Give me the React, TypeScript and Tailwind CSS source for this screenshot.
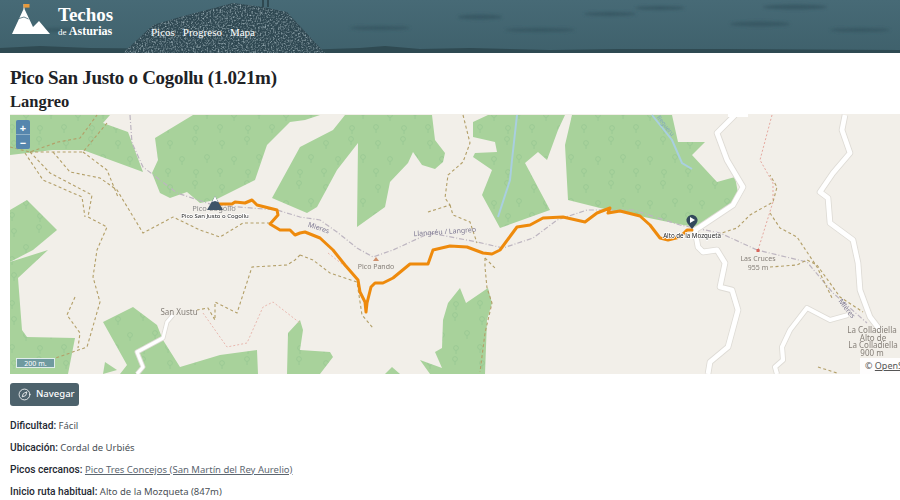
import { Compass } from 'lucide-react';

const FOREST = [
  '10,115 110,115 103,123 128,132 143,172 83,150 53,150 10,155',
  '155,138 193,115 320,115 305,120 290,122 267,145 255,180 215,200 200,203 187,192 170,198 160,193 152,173 158,160',
  '300,147 333,130 345,115 432,115 435,140 445,153 443,162 435,169 422,165 413,152 408,163 390,182 385,207 357,227 358,143 337,170 317,207 307,213 272,198',
  '473,122 488,115 565,115 558,130 547,160 538,152 525,163 550,210 500,228 482,195 492,170 473,157 475,153 497,152 495,142 473,137',
  '572,115 672,115 678,142 705,142 692,155 717,182 735,177 738,193 730,210 697,227 683,225 600,208 568,200 565,145',
  '10,210 27,200 57,230 33,250 10,262',
  '48,250 18,278 22,330 27,337 75,338 68,374 10,374 10,262',
  '103,322 133,307 157,325 163,340 180,367 220,355 257,350 258,374 120,374 127,365',
  '105,362 117,370 103,374',
  '300,320 303,330 300,350 330,352 333,357 320,374 287,374 288,333',
  '460,288 466,303 488,288 492,303 487,320 485,374 430,374 420,360 442,368 435,352 442,348 443,320 448,303',
  '392,367 400,374 385,374',
];

const ROADS = [
  { points: '735,115 717,133 727,160 743,187 733,205 700,227 695,230 698,247 703,252 717,250 725,263 720,287 732,290 738,310 728,347 710,362 708,374', width: 4.8 },
  { points: '845,115 842,130 850,153 833,173 820,192 828,198 830,223 853,240 858,263 860,290 870,317 880,330', width: 4.8 },
  { points: '777,374 775,367 783,360 782,347 790,330 807,308 830,320 848,315', width: 4.2 },
  { points: '137,374 143,367 137,352 163,338 167,322 173,315', width: 3.2 },
];

const TRACKS = [
  '10,147 30,152 58,142 80,138 97,115',
  '107,123 83,152 53,152 30,152',
  '53,152 70,172 100,178 117,190 143,233 173,217 200,230 220,237 243,223 270,223',
  '83,152 107,170 118,197',
  '30,152 50,173 92,195 88,217 107,227 97,250 93,277 100,302 87,347 50,360 40,368',
  '25,153 43,180 82,197 85,217',
  '75,297 67,315 80,333 78,348',
  '300,255 295,260 287,265 252,267 237,313 215,302 215,320 208,308 197,310',
  '300,255 313,260 330,273 357,282 362,315 373,328',
  '463,115 470,143 463,162 448,175 445,198 450,205 428,212',
  '450,205 453,215 470,222 477,243',
  '485,258 485,267 487,288 492,303 485,333 480,372',
  '485,258 495,268',
  '707,238 737,228 750,215 773,202 777,187 770,175',
  '770,213 780,228 797,237 817,267 833,300',
  '770,267 797,265 807,260 817,265 840,297 863,312',
  '818,367 837,373',
];

const ROUTE =
  '217,204 232,204 235,202 245,203 252,200 257,205 277,210 278,215 270,224 280,230 290,230 295,235 300,233 305,232 320,238 333,250 345,265 358,280 360,292 365,302 366,312 367,303 371,287 375,283 383,283 393,278 410,264 428,264 433,250 450,246 467,247 483,253 492,254 500,250 517,227 530,225 543,218 563,217 585,222 597,213 610,208 608,213 620,211 640,216 650,225 660,238 668,240 680,237 687,230 692,230';

const labelCls = "font-['Roboto',sans-serif] text-[10.2px] font-medium text-[#1f2933]";

function MapDrawing() {
  return (
    <svg viewBox="10 114 890 260" className="block h-[260px] w-[890px] blur-[0.35px]">
      <defs>
        <g id="tree">
          <circle cx="0" cy="-2" r="2.4" fill="none" stroke="#97c692" strokeWidth="0.8" />
          <path d="M0 0.5 V4" stroke="#97c692" strokeWidth="0.8" />
        </g>
        <pattern id="trees" x="6" y="3" width="52" height="44" patternUnits="userSpaceOnUse">
          <rect width="52" height="44" fill="#a8d29b" />
          <use href="#tree" x="8" y="10" />
          <use href="#tree" x="33" y="6" />
          <use href="#tree" x="20" y="26" />
          <use href="#tree" x="45" y="24" />
          <use href="#tree" x="6" y="38" />
          <use href="#tree" x="34" y="39" />
        </pattern>
      </defs>
      <rect x="10" y="114" width="890" height="260" fill="#f2efe9" />
      {FOREST.map((points) => (
        <polygon key={points} points={points} fill="url(#trees)" />
      ))}
      <polyline points="517,115 512,160 510,180 498,217" fill="none" stroke="#a9cfe0" strokeWidth="2" />
      <polyline points="652,115 672,140 682,163 692,169" fill="none" stroke="#a9cfe0" strokeWidth="2" />

      {/* boundary */}
      <polyline
        points="130,115 132,143 143,167 177,193 213,205 277,210 300,217 320,220 337,232 357,248 373,257 393,250 430,233 477,242 503,248 533,238 557,220 587,210 633,210 680,225 720,233 757,250 807,262 833,293 867,323"
        fill="none"
        stroke="#bdb5c0"
        strokeWidth="1.2"
        strokeDasharray="5 2 1 2"
      />
      {ROADS.map((road) => (
        <g key={road.points}>
          <polyline points={road.points} fill="none" stroke="#dedbd5" strokeWidth={road.width + 1.7} strokeLinejoin="round" />
          <polyline points={road.points} fill="none" stroke="#ffffff" strokeWidth={road.width} strokeLinejoin="round" />
        </g>
      ))}
      <rect x="728" y="114" width="20" height="3" fill="#ffffff" />
      {/* footpaths */}
      <polyline
        points="772,115 760,160 773,183 773,202 758,250"
        fill="none"
        stroke="#e5a9a0"
        strokeWidth="1"
        strokeDasharray="2 2"
      />
      <polyline
        points="203,313 227,347 247,343 263,307 273,302 300,323"
        fill="none"
        stroke="#e9b9b0"
        strokeWidth="1"
        strokeDasharray="2 2"
      />
      <polyline points="328,253 347,268" fill="none" stroke="#e9b9b0" strokeWidth="1" strokeDasharray="2 2" />
      {TRACKS.map((points) => (
        <polyline
          key={points}
          points={points}
          fill="none"
          stroke="#b39f68"
          strokeWidth="1.1"
          strokeDasharray="3 2.5"
        />
      ))}

      <polyline points={ROUTE} fill="none" stroke="#ee8a0c" strokeWidth="3" strokeLinejoin="round" strokeLinecap="round" />

      <g fontFamily="'Noto Sans', sans-serif" fontSize="7" textAnchor="middle" fill="#857f78">
        <text x="376" y="269">Pico Pando</text>
        <text x="179" y="315" fontSize="8">San Xustu</text>
        <text x="758" y="261">
          Las Cruces
          <tspan x="758" dy="8.5">955 m</tspan>
        </text>
        <text x="872" y="333" fontSize="8">
          La Colladiella
          <tspan x="873" dy="7.6">Alto de</tspan>
          <tspan x="873" dy="7.6">La Colladiella</tspan>
          <tspan x="872" dy="7.8">900 m</tspan>
        </text>
        <g fill="#7d7892">
          <text transform="translate(318 230) rotate(18)">Mieres</text>
          <text transform="translate(445 234) rotate(-4)">Llangréu / Langreo</text>
          <text transform="translate(845 310) rotate(52)">Mieres</text>
        </g>
        <text transform="translate(664 127) rotate(52)" fill="#7fa6bd" fontSize="6">Regueru</text>
      </g>
      <polygon points="376,257 379,261 373,261" fill="#d08f6a" />
      <rect x="756.5" y="249" width="3" height="3" fill="#d9655a" />

      {/* peak marker */}
      <text x="214" y="211" fontFamily="'Noto Sans', sans-serif" fontSize="7.5" textAnchor="middle" fill="#8a8a8a">
        Pico Cogollo
        <tspan x="215" dy="7" fontSize="6" fill="#222222" stroke="#ffffff" strokeWidth="1.5" paintOrder="stroke">
          Pico San Justo o Cogollu
        </tspan>
      </text>
      <polygon points="215,196 223,210 207,210" fill="#3e5468" />
      <polygon points="215,196 218,202 215,201 212,202" fill="#ffffff" />

      {/* parking marker */}
      <path d="M692 229 L687.6 223.5 A5.4 5.4 0 1 1 696.4 223.5 Z" fill="#33495c" />
      <polygon points="690,217 695,220 690,223" fill="#ffffff" />
      <text x="692" y="238" fontFamily="'Noto Sans', sans-serif" fontSize="6.2" textAnchor="middle" fill="#222222" stroke="#ffffff" strokeWidth="1.5" paintOrder="stroke">
        Alto de la Mozqueta
      </text>
    </svg>
  );
}

function HeaderBackdrop() {
  return (
    <svg viewBox="0 0 900 53" preserveAspectRatio="none" className="absolute inset-0 h-full w-full">
      <defs>
        <filter id="grain" x="0" y="0" width="100%" height="100%">
          <feTurbulence type="fractalNoise" baseFrequency="0.6" numOctaves="2" seed="4" />
          <feColorMatrix values="0 0 0 0 0.34  0 0 0 0 0.44  0 0 0 0 0.48  2.4 0 0 0 -1.1" />
          <feComposite in2="SourceGraphic" operator="in" />
        </filter>
        <filter id="soft">
          <feGaussianBlur stdDeviation="1.4" />
        </filter>
        <linearGradient id="sky" x1="0" y1="0" x2="0" y2="1">
          <stop offset="0" stopColor="#476a76" />
          <stop offset="1" stopColor="#3f616c" />
        </linearGradient>
      </defs>
      <rect width="900" height="53" fill="url(#sky)" />
      <g fill="#365560" filter="url(#soft)" opacity="0.8">
        <ellipse cx="480" cy="17" rx="22" ry="2.5" />
        <ellipse cx="610" cy="14" rx="26" ry="2" />
        <ellipse cx="660" cy="8" rx="25" ry="2" />
        <ellipse cx="795" cy="7" rx="32" ry="2.5" />
        <ellipse cx="760" cy="24" rx="30" ry="2.5" />
        <ellipse cx="540" cy="30" rx="35" ry="2" />
        <ellipse cx="380" cy="28" rx="30" ry="2" />
        <ellipse cx="860" cy="30" rx="30" ry="2" />
        <ellipse cx="60" cy="30" rx="36" ry="2" />
      </g>
      <path d="M0 48 L40 46 L90 48 L300 50 L360 48 L385 46 L420 49 L470 48 L550 50 L620 49 L720 49 L900 50 V53 H0 Z" fill="#2f4a52" />
      <path d="M123 53 L153 25 L180 17 L233 3 L263 7 L287 12 L310 37 L325 53 Z" fill="#2f4852" />
      <path d="M123 53 L153 25 L180 17 L233 3 L263 7 L287 12 L310 37 L325 53 Z" fill="#000" filter="url(#grain)" />
      <path d="M263 0 V7 M268 0 V7" stroke="#263b42" strokeWidth="1.4" />
    </svg>
  );
}

function Logo() {
  return (
    <svg viewBox="0 0 40 32" className="h-[32px] w-[40px] shrink-0">
      <path d="M12 5 V0" stroke="#ffffff" strokeWidth="0.8" />
      <rect x="11.5" y="0" width="6" height="3.6" fill="#e89a3c" />
      <path d="M0 30 L12 4 L21 23 L27 17 L38 30 Z" fill="#ffffff" />
      <path d="M7 14.5 L12 13 L16.5 15" fill="none" stroke="#476a76" strokeWidth="0.8" />
    </svg>
  );
}

export default function App() {
  return (
    <div className="h-[500px] overflow-hidden bg-white font-['Noto_Sans',sans-serif] text-[#4a5056]">
      <header className="relative h-[53px] overflow-hidden">
        <HeaderBackdrop />
        <div className="relative flex h-full items-start pl-[12px] pt-[4px]">
          <Logo />
          <div className="ml-[6px] w-[93px] font-['Liberation_Serif',serif] font-bold leading-none text-white">
            <div className="mt-[1px] text-[19px] leading-[20px]">Techos</div>
            <div className="text-[12px] leading-[13px]">
              <span className="text-[9px] font-normal">de</span> Asturias
            </div>
          </div>
          <nav className="flex gap-[8px] pt-[21px] font-['Liberation_Serif',serif] text-[11px] leading-[14px] text-white">
            <span>Picos</span>
            <span>Progreso</span>
            <span>Mapa</span>
          </nav>
        </div>
      </header>

      <main className="pl-[10px]">
        <h1 className="pt-[13px] font-['Liberation_Serif',serif] text-[19px] font-bold leading-[24px] tracking-[-0.3px] text-[#1e2226]">
          Pico San Justo o Cogollu (1.021m)
        </h1>
        <h2 className="pt-[1px] font-['Liberation_Serif',serif] text-[16.5px] font-bold leading-[21px] text-[#1e2226]">
          Langreo
        </h2>

        <div className="relative mt-[2px] h-[260px] w-[890px] overflow-hidden">
          <MapDrawing />
          <div className="absolute left-[6px] top-[6px] flex w-[14px] flex-col gap-px rounded-[2px] bg-[#8fb0c8] font-bold text-white">
            <span className="flex h-[14px] items-center justify-center rounded-t-[2px] bg-[#5686ad] text-[11px] leading-none">+</span>
            <span className="flex h-[14px] items-center justify-center rounded-b-[2px] bg-[#5686ad] text-[11px] leading-none">−</span>
          </div>
          <div className="absolute bottom-[6px] left-[6px] flex h-[10px] w-[39px] items-center justify-center border border-[#dfeceb] bg-[#6f9a9f] text-[7px] leading-none text-white">
            200 m.
          </div>
          <div className="absolute bottom-0 left-[850px] h-[16px] w-[40px] overflow-hidden whitespace-nowrap bg-white/90 pl-[5px] text-[9px] leading-[16px] text-[#555]">
            © <span className="underline">OpenStreetMap</span>
          </div>
        </div>

        <button className="mt-[9px] flex h-[23px] w-[69px] items-center justify-start gap-[5px] rounded-[3px] bg-[#4d626c] pl-[8px] text-[9.5px] font-medium text-white">
          <Compass className="h-[13px] w-[13px]" strokeWidth={1.5} />
          Navegar
        </button>

        <div className="mt-[13px] flex flex-col gap-[8px] text-[9.5px] leading-[14px]">
          <p><span className={labelCls}>Dificultad:</span> Fácil</p>
          <p><span className={labelCls}>Ubicación:</span> Cordal de Urbiés</p>
          <p>
            <span className={labelCls}>Picos cercanos:</span>{' '}
            <span className="text-[#5c6670] underline">Pico Tres Concejos (San Martín del Rey Aurelio)</span>
          </p>
          <p><span className={labelCls}>Inicio ruta habitual:</span> Alto de la Mozqueta (847m)</p>
        </div>
      </main>
    </div>
  );
}
